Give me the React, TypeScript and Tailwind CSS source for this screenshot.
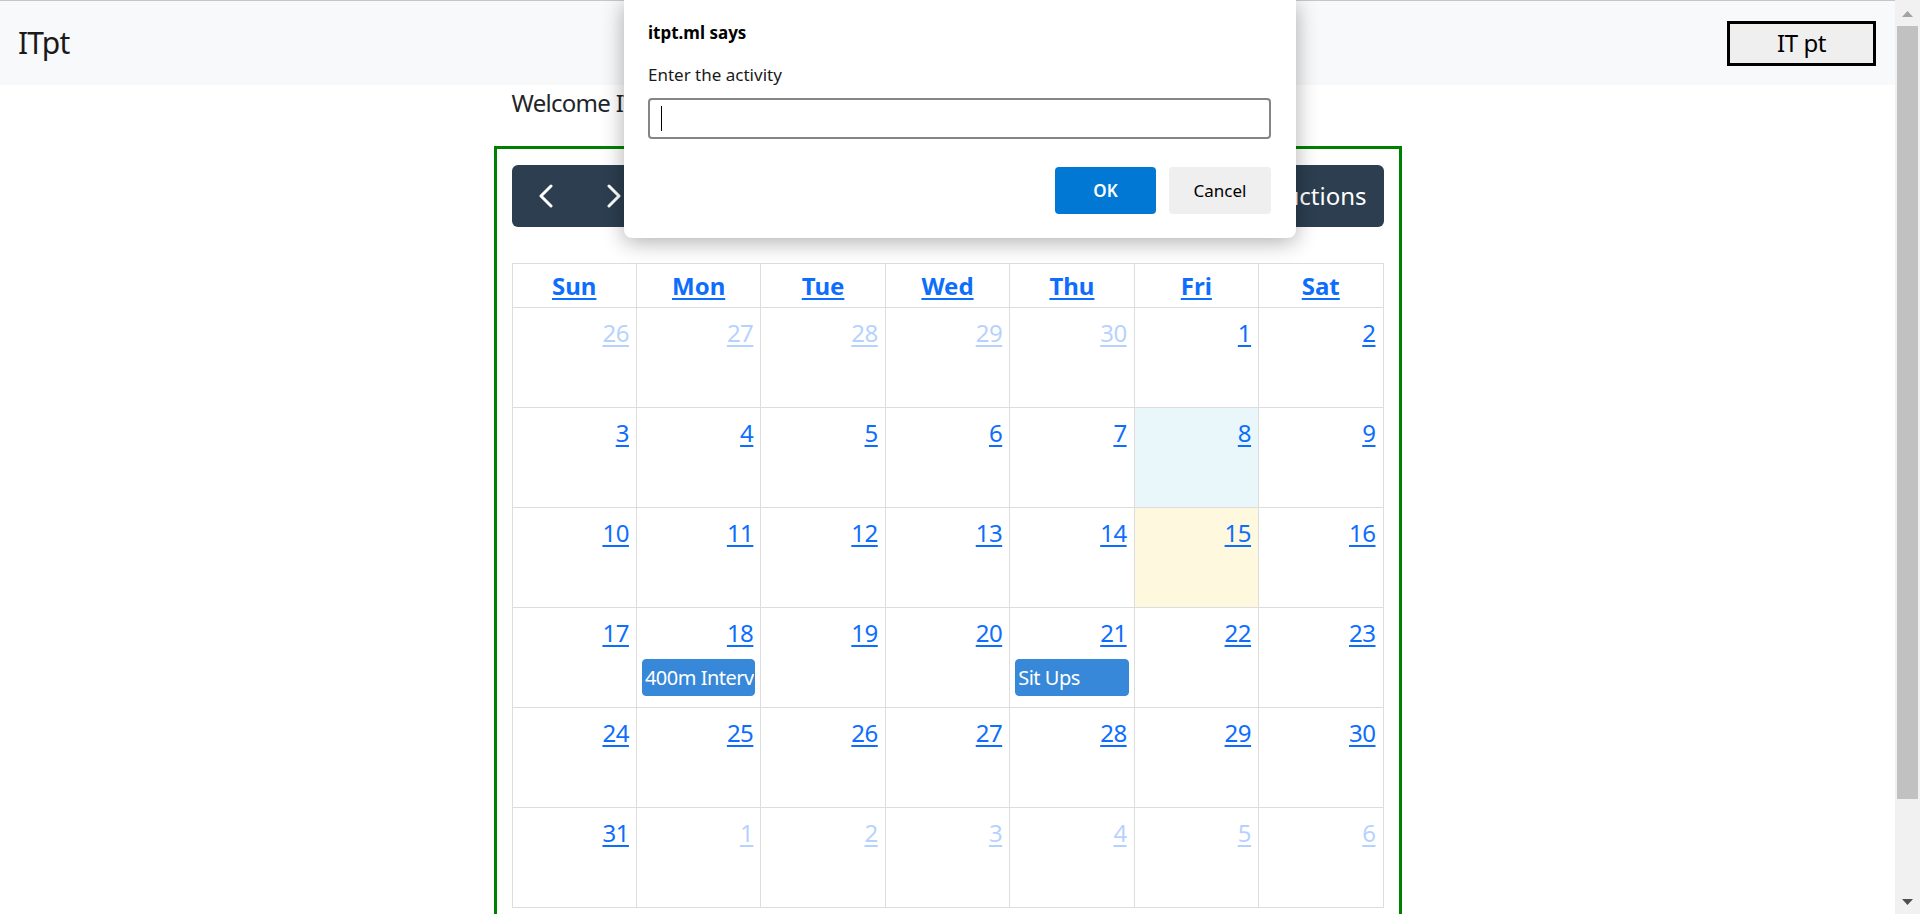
import React from "react";

type Cell = { d: number; other?: boolean; bg?: string; event?: string };

const rows: Cell[][] = [
  [
    { d: 26, other: true },
    { d: 27, other: true },
    { d: 28, other: true },
    { d: 29, other: true },
    { d: 30, other: true },
    { d: 1 },
    { d: 2 },
  ],
  [{ d: 3 }, { d: 4 }, { d: 5 }, { d: 6 }, { d: 7 }, { d: 8, bg: "blue" }, { d: 9 }],
  [{ d: 10 }, { d: 11 }, { d: 12 }, { d: 13 }, { d: 14 }, { d: 15, bg: "today" }, { d: 16 }],
  [
    { d: 17 },
    { d: 18, event: "400m Intervals" },
    { d: 19 },
    { d: 20 },
    { d: 21, event: "Sit Ups" },
    { d: 22 },
    { d: 23 },
  ],
  [{ d: 24 }, { d: 25 }, { d: 26 }, { d: 27 }, { d: 28 }, { d: 29 }, { d: 30 }],
  [
    { d: 31 },
    { d: 1, other: true },
    { d: 2, other: true },
    { d: 3, other: true },
    { d: 4, other: true },
    { d: 5, other: true },
    { d: 6, other: true },
  ],
];

const days = ["Sun", "Mon", "Tue", "Wed", "Thu", "Fri", "Sat"];

function Chevron({ dir }: { dir: "l" | "r" }) {
  return (
    <svg width="16" height="24" viewBox="0 0 16 24" fill="none">
      {dir === "l" ? (
        <polyline points="13,2 3,12 13,22" stroke="white" strokeWidth="3" strokeLinecap="round" strokeLinejoin="round" />
      ) : (
        <polyline points="3,2 13,12 3,22" stroke="white" strokeWidth="3" strokeLinecap="round" strokeLinejoin="round" />
      )}
    </svg>
  );
}

export default function App() {
  return (
    <div className="relative flex h-[914px] w-[1920px] overflow-hidden bg-white font-['Noto_Sans',sans-serif]">
      {/* Main page */}
      <div className="flex w-[1895px] flex-col">
        <nav className="flex h-[85px] shrink-0 items-center justify-between border-t border-[#c6c6c6] bg-[#f8f9fa] pl-[18px] pr-[19px]">
          <span className="text-[30px] leading-[40px] tracking-[-0.8px] text-[#1a1a1a]">ITpt</span>
          <button className="flex h-[45px] w-[149px] items-center justify-center border-[3px] border-black bg-[#efefef] text-[24px] leading-none tracking-[-0.4px] text-black">
            IT pt
          </button>
        </nav>

        <div className="mx-auto w-[908px]">
          <div className="pl-[18px] text-[24px] leading-[36px] tracking-[-0.7px] text-[#212529]">Welcome ITpt</div>

          <div className="mt-[25px] h-[800px] border-[3px] border-[#008000] px-[15px] pt-[16px]">
            {/* Toolbar */}
            <div className="flex h-[62px] items-center justify-between">
              <div className="flex h-full">
                <button className="flex h-full w-[68px] items-center justify-center rounded-l-[6px] bg-[#2c3e50]">
                  <Chevron dir="l" />
                </button>
                <button className="flex h-full w-[68px] items-center justify-center rounded-r-[6px] bg-[#2c3e50]">
                  <Chevron dir="r" />
                </button>
              </div>
              <button className="flex h-full items-center rounded-[6px] bg-[#2c3e50] px-[17px] text-[24px] text-white">
                Instructions
              </button>
            </div>

            {/* Calendar grid */}
            <div className="mt-[36px] border-l border-t border-[#dddddd]">
              <div className="grid h-[44px] grid-cols-7">
                {days.map((d) => (
                  <div
                    key={d}
                    className="flex items-center justify-center border-b border-r border-[#dddddd] text-[24px] font-bold leading-[36px] text-[#0d6efd] underline decoration-[2px] underline-offset-[3px]"
                  >
                    {d}
                  </div>
                ))}
              </div>
              {rows.map((row, i) => (
                <div key={i} className="grid h-[100px] grid-cols-7">
                  {row.map((c, j) => (
                    <div
                      key={j}
                      className={`flex flex-col overflow-hidden border-b border-r border-[#dddddd] ${
                        c.bg === "blue" ? "bg-[#e9f6fa]" : c.bg === "today" ? "bg-[#fef8df]" : "bg-white"
                      }`}
                    >
                      <div className="flex justify-end pr-[7px] pt-[7px]">
                        <span
                          className={`text-[24px] leading-[36px] tracking-[-0.5px] text-[#0d6efd] underline decoration-[2px] underline-offset-[3px] ${
                            c.other ? "opacity-30" : ""
                          }`}
                        >
                          {c.d}
                        </span>
                      </div>
                      {c.event && (
                        <div className="mx-[5px] mt-[8px] h-[37px] overflow-hidden whitespace-nowrap rounded-[4px] border border-[#3788d8] bg-[#3788d8] px-[2px] text-[20px] leading-[35px] tracking-[-0.5px] text-white">
                          {c.event}
                        </div>
                      )}
                    </div>
                  ))}
                </div>
              ))}
            </div>
          </div>
        </div>
      </div>

      {/* Scrollbar */}
      <div className="flex w-[25px] shrink-0 flex-col items-center bg-[#f1f1f1]">
        <svg className="mt-[11px]" width="11" height="6" viewBox="0 0 11 6">
          <polygon points="0,6 11,6 5.5,0" fill="#a3a3a3" />
        </svg>
        <div className="mt-[9px] h-[773px] w-[21px] bg-[#c1c1c1]" />
        <div className="flex-1" />
        <svg className="mb-[9px]" width="11" height="6" viewBox="0 0 11 6">
          <polygon points="0,0 11,0 5.5,6" fill="#505050" />
        </svg>
      </div>

      {/* Browser prompt dialog */}
      <div className="absolute left-[624px] top-0 flex h-[238px] w-[672px] flex-col rounded-b-[8px] bg-white px-[24px] pt-[21px] shadow-[0_4px_22px_rgba(0,0,0,0.32)]">
        <div className="text-[17px] font-bold leading-[24px] text-black">itpt.ml says</div>
        <div className="mt-[18px] text-[17px] leading-[24px] text-[#1a1a1a]">Enter the activity</div>
        <div className="mt-[11px] flex h-[41px] w-[623px] items-center rounded-[4px] border-2 border-[#858585] pl-[11px]">
          <div className="h-[25px] w-px bg-black" />
        </div>
        <div className="mt-[28px] flex justify-end gap-[13px] pr-px">
          <button className="flex h-[47px] w-[101px] items-center justify-center rounded-[4px] bg-[#0078d4] text-[17px] font-semibold text-white">
            OK
          </button>
          <button className="flex h-[47px] w-[102px] items-center justify-center rounded-[4px] bg-[#efefef] text-[17px] text-black">
            Cancel
          </button>
        </div>
      </div>
    </div>
  );
}
